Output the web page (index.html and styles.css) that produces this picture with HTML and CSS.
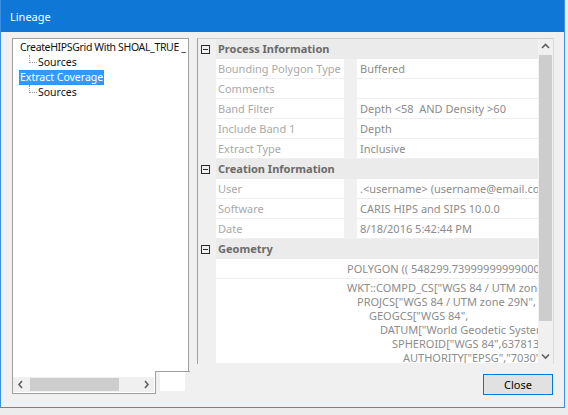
FILE: index.html
```html
<!DOCTYPE html>
<html>
<head>
    <title>Lineage</title>
    <meta charset="UTF-8">
    <link rel="stylesheet" href="styles.css">
</head>
<body>
    <div class="window">
        <div class="titlebar">Lineage</div>
        <div class="content">
            <div class="left">
                <div class="tree">
                    <div class="node">CreateHIPSGrid With SHOAL_TRUE _</div>
                    <div class="node child"><span class="branch"></span>Sources</div>
                    <div class="node selected-row"><span class="selected">Extract Coverage</span></div>
                    <div class="node child"><span class="branch"></span>Sources</div>
                </div>
                <div class="tree-foot">
                    <div class="hbar-box">
                        <div class="hbar">
                            <svg class="arrow" width="15" height="15" viewBox="0 0 15 15"><polyline points="9,4 6,7.5 9,11" fill="none" stroke="#606060" stroke-width="1.6"/></svg>
                            <div class="hthumb"></div>
                            <div class="hspace"></div>
                            <svg class="arrow" width="15" height="15" viewBox="0 0 15 15"><polyline points="6,4 9,7.5 6,11" fill="none" stroke="#606060" stroke-width="1.6"/></svg>
                        </div>
                    </div>
                    <div class="notch"><div class="blank"></div></div>
                </div>
            </div>

            <div class="right">
                <div class="props">
                    <div class="grid">
                        <div class="cat">
                            <div class="gutter"><span class="toggle"></span></div>
                            <div class="cat-name">Process Information</div>
                        </div>
                        <div class="prop">
                            <div class="gutter"></div>
                            <div class="pname">Bounding Polygon Type</div>
                            <div class="pgap"></div>
                            <div class="pval">Buffered</div>
                        </div>
                        <div class="prop">
                            <div class="gutter"></div>
                            <div class="pname">Comments</div>
                            <div class="pgap"></div>
                            <div class="pval"></div>
                        </div>
                        <div class="prop">
                            <div class="gutter"></div>
                            <div class="pname">Band Filter</div>
                            <div class="pgap"></div>
                            <div class="pval">Depth &lt;58  AND Density &gt;60</div>
                        </div>
                        <div class="prop">
                            <div class="gutter"></div>
                            <div class="pname">Include Band 1</div>
                            <div class="pgap"></div>
                            <div class="pval">Depth</div>
                        </div>
                        <div class="prop">
                            <div class="gutter"></div>
                            <div class="pname">Extract Type</div>
                            <div class="pgap"></div>
                            <div class="pval">Inclusive</div>
                        </div>
                        <div class="cat">
                            <div class="gutter"><span class="toggle"></span></div>
                            <div class="cat-name">Creation Information</div>
                        </div>
                        <div class="prop">
                            <div class="gutter"></div>
                            <div class="pname">User</div>
                            <div class="pgap"></div>
                            <div class="pval">.&lt;username&gt; (username@email.com&gt;)</div>
                        </div>
                        <div class="prop">
                            <div class="gutter"></div>
                            <div class="pname">Software</div>
                            <div class="pgap"></div>
                            <div class="pval">CARIS HIPS and SIPS 10.0.0</div>
                        </div>
                        <div class="prop">
                            <div class="gutter"></div>
                            <div class="pname">Date</div>
                            <div class="pgap"></div>
                            <div class="pval">8/18/2016 5:42:44 PM</div>
                        </div>
                        <div class="cat">
                            <div class="gutter"><span class="toggle"></span></div>
                            <div class="cat-name">Geometry</div>
                        </div>
                        <div class="prop">
                            <div class="gutter"></div>
                            <div class="wide">POLYGON (( 548299.73999999999000000, 5916347.1200000000000</div>
                        </div>
                        <div class="prop wkt-row">
                            <div class="gutter"></div>
                            <div class="wide wkt">
                                <div class="l0">WKT::COMPD_CS["WGS 84 / UTM zone 29N + MSL",</div>
                                <div class="l1">PROJCS["WGS 84 / UTM zone 29N",</div>
                                <div class="l2">GEOGCS["WGS 84",</div>
                                <div class="l3">DATUM["World Geodetic System 1984",</div>
                                <div class="l4">SPHEROID["WGS 84",6378137,298.257223563,</div>
                                <div class="l5">AUTHORITY["EPSG","7030"]],</div>
                            </div>
                        </div>
                    </div>
                    <div class="vbar">
                        <svg class="varrow" width="15" height="16" viewBox="0 0 15 16"><polyline points="4,9 7.5,5.5 11,9" fill="none" stroke="#606060" stroke-width="1.6"/></svg>
                        <div class="vthumb"></div>
                        <div class="vspace"></div>
                        <svg class="varrow" width="15" height="16" viewBox="0 0 15 16"><polyline points="4,6.5 7.5,10 11,6.5" fill="none" stroke="#606060" stroke-width="1.6"/></svg>
                    </div>
                </div>
                <div class="actions">
                    <button type="button" class="close">Close</button>
                </div>
            </div>
        </div>
    </div>
</body>
</html>
```

FILE: styles.css
```css
html, body {
    margin: 0;
    background: #ececec;
}
body {
    font-family: "Noto Sans", sans-serif;
    font-size: 11px;
}
.window {
    width: 565px;
    height: 408px;
    box-sizing: border-box;
    border: 1px solid #3b8fdf;
    border-top: none;
    background: #f0f0f0;
}
.titlebar {
    height: 32px;
    background: #0f78d7;
    color: #fff;
    font-size: 11px;
    line-height: 33px;
    padding-left: 9px;
}
.content {
    display: flex;
    padding: 6px 10px 0 11px;
    gap: 8px;
}

/* tree */
.left {
    width: 177px;
}
.tree {
    height: 333px;
    box-sizing: border-box;
    border: 1px solid #a0a0a0;
    border-bottom: none;
    background: #fff;
    padding-top: 1px;
    overflow: hidden;
    font-size: 10.5px;
}
.node {
    height: 15px;
    line-height: 15px;
    padding-left: 7px;
    white-space: nowrap;
    overflow: hidden;
    color: #111;
    display: flex;
    align-items: flex-start;
}
.node:first-child {
    letter-spacing: -0.35px;
}
.node.selected-row {
    padding-left: 6px;
}
.selected {
    background: #3399ff;
    color: #fff;
    padding: 0 1px;
    outline: 1px dotted #b07030;
    outline-offset: -1px;
}
.node.child {
    padding-left: 16px;
}
.branch {
    width: 7px;
    height: 7px;
    border-left: 1px dotted #9a9a9a;
    border-bottom: 1px dotted #9a9a9a;
    margin-right: 1px;
}
.tree-foot {
    display: flex;
    align-items: flex-start;
}
.hbar-box {
    width: 144px;
    height: 23px;
    box-sizing: border-box;
    border: 1px solid #a0a0a0;
    border-top: none;
    background: #fff;
    padding-top: 6px;
}
.hbar {
    display: flex;
    height: 15px;
    background: #f0f0f0;
    margin-right: 1px;
}
.arrow {
    flex: none;
    display: block;
}
.hthumb {
    width: 89px;
    margin: 1px 0 1px 2px;
    background: #cdcdcd;
}
.hspace {
    flex: 1;
}
.notch {
    flex: 1;
    border-top: 1px solid #a0a0a0;
    margin-right: -1px;
}
.blank {
    width: 25px;
    height: 19px;
    margin-left: 4px;
    background: #fff;
}

/* property grid */
.right {
    width: 357px;
}
.props {
    display: flex;
    height: 326px;
    box-sizing: border-box;
    border-top: 1px solid #cfcfcf;
    border-left: 1px solid #a0a0a0;
    border-right: 1px solid #dcdcdc;
    background: #f0f0f0;
}
.grid {
    width: 340px;
    overflow: hidden;
}
.cat, .prop {
    display: flex;
    height: 20px;
}
.gutter {
    width: 18px;
    flex: none;
    background: #f0f0f0;
    display: flex;
    align-items: center;
}
.toggle {
    width: 9px;
    height: 9px;
    box-sizing: border-box;
    border: 1px solid #2b2b2b;
    background: linear-gradient(#2b2b2b, #2b2b2b) center / 5px 1px no-repeat;
    margin-left: 3px;
}
.cat-name {
    flex: 1;
    background: #ebebeb;
    color: #6a6a6a;
    font-weight: bold;
    line-height: 20px;
    padding-left: 2px;
}
.pname, .pval, .wide {
    box-sizing: border-box;
    background: #fff;
    border-bottom: 1px solid #efefef;
    line-height: 19px;
    white-space: pre;
    overflow: hidden;
}
.pname {
    width: 128px;
    color: #a9a9a9;
    padding-left: 2px;
}
.pgap {
    width: 13px;
    background: #f0f0f0;
}
.pval {
    width: 181px;
    color: #8c8c8c;
    padding-left: 3px;
}
.wide {
    width: 322px;
    color: #8c8c8c;
    padding-left: 131px;
}
.wkt-row {
    height: 84px;
}
.wkt {
    white-space: normal;
    padding-left: 0;
    padding-top: 2px;
    line-height: 14px;
    border-bottom: none;
}
.wkt div {
    white-space: nowrap;
}
.l0 { padding-left: 131px; }
.l1 { padding-left: 141px; }
.l2 { padding-left: 153px; }
.l3 { padding-left: 164px; }
.l4 { padding-left: 176px; }
.l5 { padding-left: 187px; }

.vbar {
    width: 15px;
    display: flex;
    flex-direction: column;
    background: #f0f0f0;
}
.varrow {
    display: block;
    flex: none;
}
.vthumb {
    height: 266px;
    margin: 0 1px;
    background: #cdcdcd;
}
.vspace {
    flex: 1;
}

.actions {
    display: flex;
    justify-content: flex-end;
    margin-top: 10px;
    padding-right: 1px;
}
.close {
    width: 70px;
    height: 21px;
    border: 1px solid #0078d7;
    background: #e1e1e1;
    font-family: "Noto Sans", sans-serif;
    font-size: 11px;
    color: #000;
    padding: 0;
}
```
